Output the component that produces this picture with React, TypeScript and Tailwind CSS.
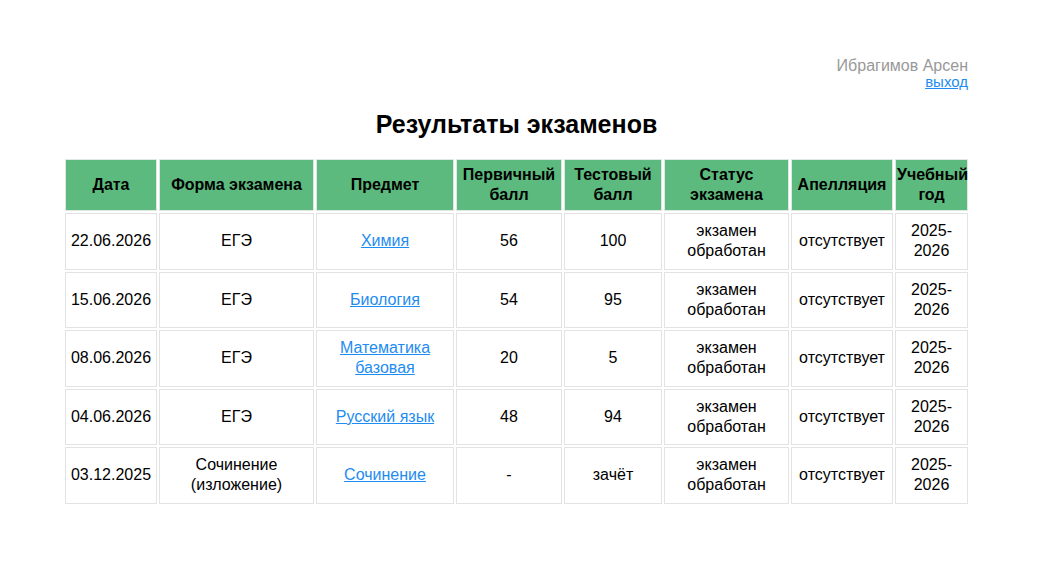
import React from "react";

type Row = {
  date: string;
  form: string;
  subject: string;
  primary: string;
  test: string;
};

const rows: Row[] = [
  { date: "22.06.2026", form: "ЕГЭ", subject: "Химия", primary: "56", test: "100" },
  { date: "15.06.2026", form: "ЕГЭ", subject: "Биология", primary: "54", test: "95" },
  { date: "08.06.2026", form: "ЕГЭ", subject: "Математика базовая", primary: "20", test: "5" },
  { date: "04.06.2026", form: "ЕГЭ", subject: "Русский язык", primary: "48", test: "94" },
  { date: "03.12.2025", form: "Сочинение (изложение)", subject: "Сочинение", primary: "-", test: "зачёт" },
];

const th = "border border-[#dfe9e2] bg-[#5cba7e] font-bold text-black text-center align-middle px-[1px] h-[52px] leading-[20px]";
const td = "border border-[#e3e3e3] bg-white text-black text-center align-middle px-[2px] h-[56.5px] leading-[20px]";

export default function App() {
  return (
    <div className="min-h-[562px] w-[1040px] bg-white font-['Liberation_Sans',Arial,sans-serif] text-[16px]">
      <div className="ml-[63px] w-[907px] pt-[56px]">
        <div className="flex flex-col items-end pr-[2px]">
          <div className="text-[16px] leading-[20px] text-[#999999]">Ибрагимов Арсен</div>
          <a href="#" className="text-[15px] leading-[11px] text-[#1e8cf0] underline">выход</a>
        </div>
        <h1 className="mt-[23px] text-center text-[25px] font-bold leading-[28px] text-black">
          Результаты экзаменов
        </h1>
        <table className="mt-[19px] w-[907px] table-fixed border-separate border-spacing-[2px]">
          <colgroup>
            <col className="w-[92px]" />
            <col className="w-[155px]" />
            <col className="w-[138px]" />
            <col className="w-[106px]" />
            <col className="w-[98px]" />
            <col className="w-[125px]" />
            <col className="w-[102px]" />
            <col className="w-[73px]" />
          </colgroup>
          <thead>
            <tr>
              <th className={th}>Дата</th>
              <th className={th}>Форма экзамена</th>
              <th className={th}>Предмет</th>
              <th className={th}>Первичный балл</th>
              <th className={th}>Тестовый балл</th>
              <th className={th}>Статус экзамена</th>
              <th className={th}>Апелляция</th>
              <th className={th}>Учебный год</th>
            </tr>
          </thead>
          <tbody>
            {rows.map((r) => (
              <tr key={r.date}>
                <td className={td}>{r.date}</td>
                <td className={td}>{r.form}</td>
                <td className={td}>
                  <a href="#" className="text-[#1e8cf0] underline">{r.subject}</a>
                </td>
                <td className={td}>{r.primary}</td>
                <td className={td}>{r.test}</td>
                <td className={td}>экзамен обработан</td>
                <td className={td}>отсутствует</td>
                <td className={td}>2025-2026</td>
              </tr>
            ))}
          </tbody>
        </table>
      </div>
    </div>
  );
}
